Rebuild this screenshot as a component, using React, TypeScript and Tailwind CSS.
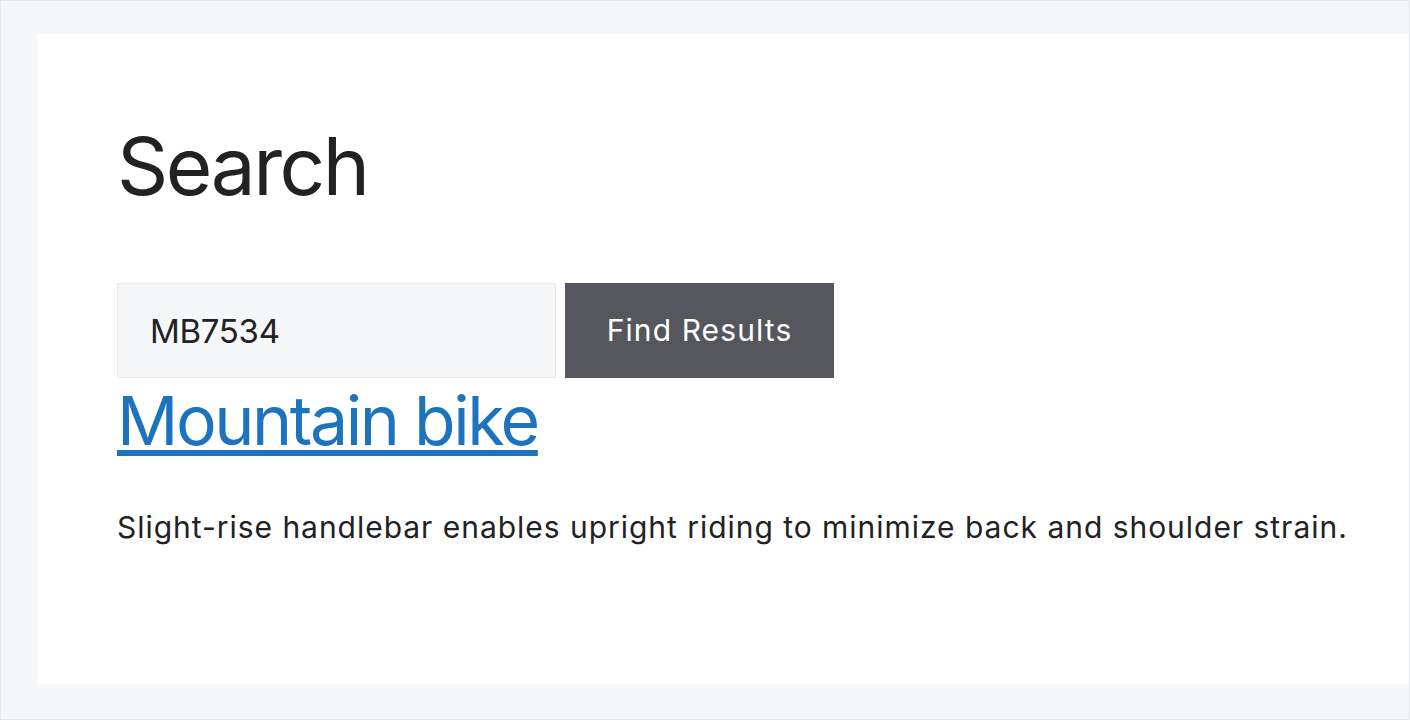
import { useState } from "react";

const font = { fontFamily: "Inter, 'Noto Sans', sans-serif" };

export default function App() {
  const [query, setQuery] = useState("MB7534");

  return (
    <div
      className="h-[720px] w-full border border-[#e4e6e9] bg-[#f6f7f9] pb-[35px] pl-[36px] pt-[33px] text-[#222222]"
      style={font}
    >
      <div className="h-full bg-white pl-[80px] pt-[84px]">
        <h1 className="text-[80px] font-normal leading-[96px] tracking-[-2.5px]">Search</h1>

        <form className="mt-[69px] flex items-stretch gap-[9px]" onSubmit={(e) => e.preventDefault()}>
          <input
            type="text"
            value={query}
            onChange={(e) => setQuery(e.target.value)}
            className="h-[95px] w-[439px] border border-[#e8e9eb] bg-[#f6f7f9] pl-[32px] text-[33px] tracking-[-0.3px] text-[#222222] outline-none"
            style={font}
          />
          <button
            type="submit"
            className="h-[95px] w-[269px] bg-[#56565e] text-[30px] tracking-[1.1px] text-white"
            style={font}
          >
            Find Results
          </button>
        </form>

        <div className="mt-px text-[68px] leading-[82px] tracking-[-2.45px]">
          <a
            href="#"
            className="text-[#1e73be] underline decoration-[6px] underline-offset-[5px]"
          >
            Mountain bike
          </a>
        </div>

        <p className="mt-[45px] text-[30px] leading-[42px] tracking-[0.97px]">
          Slight-rise handlebar enables upright riding to minimize back and shoulder strain.
        </p>
      </div>
    </div>
  );
}
